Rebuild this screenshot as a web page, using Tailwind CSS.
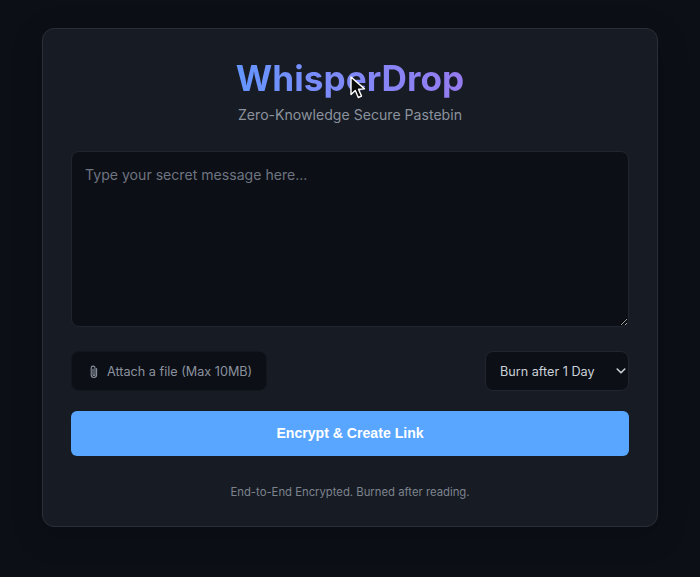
<!DOCTYPE html>
<html lang="en">
<head>
  <meta charset="UTF-8" />
  <meta name="viewport" content="width=device-width, initial-scale=1.0" />
  <title>WhisperDrop</title>
  <script src="https://cdn.jsdelivr.net/npm/@tailwindcss/browser@4"></script>
</head>
<body class="bg-[#0c0f16] font-['Inter',sans-serif] text-[#c9d1d9] h-[577px] overflow-hidden">
  <main class="relative mx-auto mt-[28px] w-[616px] h-[499px] px-[28px] pt-[27px] bg-[#171b23] border border-[#2a2e37] rounded-[12px] shadow-[0_8px_32px_rgba(0,0,0,0.2)]">
    <header class="text-center">
      <h1 class="text-[35.2px] leading-[44px] font-bold bg-gradient-to-r from-[#6495ff] to-[#957bf0] bg-clip-text text-transparent w-fit mx-auto">WhisperDrop</h1>
      <p class="mt-[4px] text-[14.1px] leading-[22px] text-[#8b929e]">Zero-Knowledge Secure Pastebin</p>
    </header>

    <textarea placeholder="Type your secret message here..." class="block mt-[25px] w-full h-[176px] px-[13px] py-[12px] bg-[#0c0f16] border border-[#21252d] rounded-[8px] text-[14.1px] leading-[22px] text-[#c9d1d9] placeholder:text-[#6e7480] outline-none"></textarea>

    <div class="mt-[24px] flex justify-between items-center">
      <button class="flex items-center gap-[8px] h-[40px] pl-[17px] pr-[14px] pt-[2px] bg-[#0c0f16] border border-[#12161d] rounded-[8px] text-[12.65px] text-[#8b929e]">
        <svg class="w-[10px] h-[14px]" viewBox="0 0 10 14" fill="none" stroke="#8b929e" stroke-width="1.1" stroke-linecap="round"><path d="M7.6 3.6v6.2a2.7 2.7 0 0 1-5.4 0V3a1.9 1.9 0 0 1 3.8 0v6.4a1 1 0 0 1-2 0V4"/></svg>
        Attach a file (Max 10MB)
      </button>
      <div class="relative w-[144px] h-[40px]">
        <select class="appearance-none w-full h-full pl-[14px] pr-[24px] pt-[2px] bg-[#0c0f16] border border-[#21252d] rounded-[8px] text-[12.65px] text-[#c9d1d9] outline-none">
          <option>Burn after 1 Day</option>
        </select>
        <svg class="absolute right-[3px] top-[16px] w-[10px] h-[8px] pointer-events-none" viewBox="0 0 10 8" fill="none" stroke="#c9d1d9" stroke-width="1.6" stroke-linecap="round" stroke-linejoin="round"><path d="M1.2 2l3.8 3.8L8.8 2"/></svg>
      </div>
    </div>

    <button class="mt-[20px] block w-full h-[45px] bg-[#58a6ff] rounded-[6px] font-['Liberation_Sans',sans-serif] text-[14.1px] font-bold text-white">Encrypt &amp; Create Link</button>

    <p class="mt-[28px] text-center text-[11.3px] leading-[16px] text-[#7d838e]">End-to-End Encrypted. Burned after reading.</p>

    <!-- mouse pointer captured in the screenshot -->
    <svg class="absolute left-[307px] top-[47px] w-[16px] h-[23px]" viewBox="0 0 16 23"><path d="M1 1v17.5l4.3-4 3 7 3.2-1.4-3-6.8 6-.4z" fill="#0a0a0a" stroke="#fff" stroke-width="1.4" stroke-linejoin="round"/></svg>
  </main>
</body>
</html>
